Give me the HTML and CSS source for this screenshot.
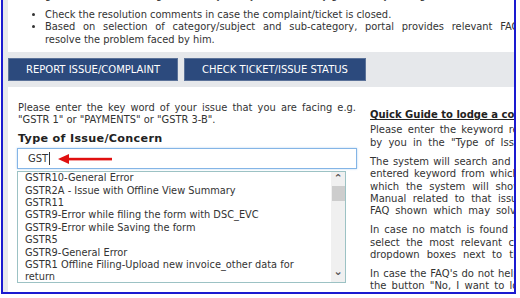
FILE: index.html
```html
<!DOCTYPE html>
<html lang="en">
  <head>
    <meta charset="UTF-8" />
    <meta name="viewport" content="width=device-width, initial-scale=1.0" />
    <title>Grievance / Complaint</title>
    <link rel="stylesheet" href="styles.css">
  </head>
  <body>
    <div class="shot">
      <div class="page">
        <div class="intro">
          <ul>
            <li class="first">get the ticket number generated by the system for every grievance you lodge.</li>
            <li>Check the resolution comments in case the complaint/ticket is closed.</li>
            <li><span class="jl">Based on selection of category/subject and sub-category, portal provides relevant FAQ/page to</span>resolve the problem faced by him.</li>
          </ul>
        </div>

        <div class="tabs">
          <button class="tab tab-report">REPORT ISSUE/COMPLAINT</button>
          <button class="tab tab-status">CHECK TICKET/ISSUE STATUS</button>
        </div>

        <div class="panel">
          <div class="left">
            <p class="hint">Please enter the key word of your issue that you are facing e.g. "GSTR 1" or "PAYMENTS" or "GSTR 3-B".</p>
            <label class="field-label">Type of Issue/Concern</label>
            <div class="search">
              <span class="typed">GST</span><span class="caret"></span>
              <svg class="pointer" width="58" height="12" viewBox="0 0 58 12">
                <path d="M0 6 L11 1 L11 11 Z" fill="#e01010" />
                <rect x="10" y="4.8" width="44" height="2.6" fill="#e01010" />
              </svg>
            </div>
            <div class="suggest">
              <ul class="items">
                <li>GSTR10-General Error</li>
                <li>GSTR2A - Issue with Offline View Summary</li>
                <li>GSTR11</li>
                <li>GSTR9-Error while filing the form with DSC_EVC</li>
                <li>GSTR9-Error while Saving the form</li>
                <li>GSTR5</li>
                <li>GSTR9-General Error</li>
                <li>GSTR1 Offline Filing-Upload new invoice_other data for return</li>
              </ul>
              <div class="scroll">
                <span class="arrow">&#8963;</span>
                <span class="thumb"></span>
                <span class="arrow arrow-down">&#8964;</span>
              </div>
            </div>
          </div>

          <div class="guide">
            <h4>Quick Guide to lodge a complaint</h4>
            <p>
              <span class="jl">Please enter the keyword related to the issue faced</span>
              <span class="jl">by you in the "Type of Issue/Concern" field shown.</span>
            </p>
            <p>
              <span class="jl">The system will search and display the issues for the</span>
              <span class="jl">entered keyword from which you can select one, on</span>
              <span class="jl">which the system will show the relevant FAQ/User</span>
              <span class="jl">Manual related to that issue. Go through the User</span>
              <span class="jl">FAQ shown which may solve your issue completely.</span>
            </p>
            <p>
              <span class="jl">In case no match is found for the keyword, you can</span>
              <span class="jl">select the most relevant category/subject from the</span>
              <span class="jl">dropdown boxes next to the field and view FAQs.</span>
            </p>
            <p>
              <span class="jl">In case the FAQ's do not help resolve your issue, click</span>
              <span class="jl">the button "No, I want to lodge a complaint" below.</span>
            </p>
          </div>
        </div>
      </div>
    </div>
  </body>
</html>
```

FILE: styles.css
```css
body {
  margin: 0;
  background-color: #ffffff;
  font-family: "DejaVu Sans", Verdana, sans-serif;
  font-size: 9.9px;
  color: #333333;
}

.shot {
  width: 511px;
  height: 292px;
  margin-left: 1px;
  border: 2px solid #1a1ad0;
  border-top: 0;
  overflow: hidden;
  background-color: #e6e8eb;
}

.page {
  width: 800px;
  padding-left: 5px;
}

.jl {
  display: block;
  text-align: justify;
  text-align-last: justify;
}

/* top notes */
.intro {
  background-color: #ffffff;
  margin-top: -10.5px;
  padding-bottom: 6px;
  line-height: 12.5px;
}

.intro ul {
  margin: 0;
  padding-left: 37px;
  width: 520px;
}

.intro .first {
  margin-bottom: 6.5px;
}

/* tab buttons */
.tabs {
  display: flex;
  gap: 6px;
  padding: 6px 0;
}

.tab {
  height: 23px;
  padding: 0;
  font-family: "DejaVu Sans", Verdana, sans-serif;
  font-size: 10px;
  color: #ffffff;
  background-color: #2c4a7d;
  border: 1px solid #5b7299;
}

.tab-report {
  width: 170px;
}

.tab-status {
  width: 182px;
}

/* form area */
.panel {
  display: flex;
  background-color: #ffffff;
  padding: 15px 0 20px 9px;
  line-height: 12.4px;
}

.left {
  width: 340px;
}

.hint {
  margin: 0;
  padding: 0 1px;
  text-align: justify;
}

.field-label {
  display: block;
  margin-top: 6px;
  padding-left: 1px;
  font-size: 11.2px;
  letter-spacing: 0.3px;
  font-weight: bold;
  color: #222222;
}

.search {
  position: relative;
  display: flex;
  align-items: center;
  height: 21px;
  margin-top: 3px;
  padding-left: 10px;
  box-sizing: border-box;
  border: 1px solid #84b5e6;
  box-shadow: 0 0 2px #b5d4f2;
  font-size: 10px;
}

.caret {
  width: 1px;
  height: 13px;
  margin-left: 1px;
  background-color: #333333;
}

.pointer {
  position: absolute;
  left: 40px;
  top: 4px;
}

.suggest {
  display: flex;
  width: 329px;
  height: 112px;
  margin-top: 2px;
  box-sizing: border-box;
  border: 1px solid #9cc2c4;
  overflow: hidden;
}

.items {
  flex: 1;
  margin: 0;
  padding: 0 6px 0 7px;
  list-style: none;
  font-size: 9.8px;
}

.scroll {
  display: flex;
  flex-direction: column;
  align-items: center;
  width: 14px;
  background-color: #f0f0f0;
}

.arrow {
  height: 14px;
  font-size: 11px;
  line-height: 14px;
  color: #555555;
  font-weight: bold;
}

.arrow-down {
  margin-top: auto;
  line-height: 8px;
  height: 14px;
}

.thumb {
  width: 13px;
  height: 15px;
  background-color: #cdcdcd;
}

/* quick guide */
.guide {
  width: 275px;
  margin-left: 13px;
  padding-top: 7px;
  font-size: 10px;
}

.guide h4 {
  margin: 0 0 3px;
  font-size: 10px;
  color: #222222;
  text-decoration: underline;
}

.guide p {
  margin: 0 0 6.5px;
}
```
